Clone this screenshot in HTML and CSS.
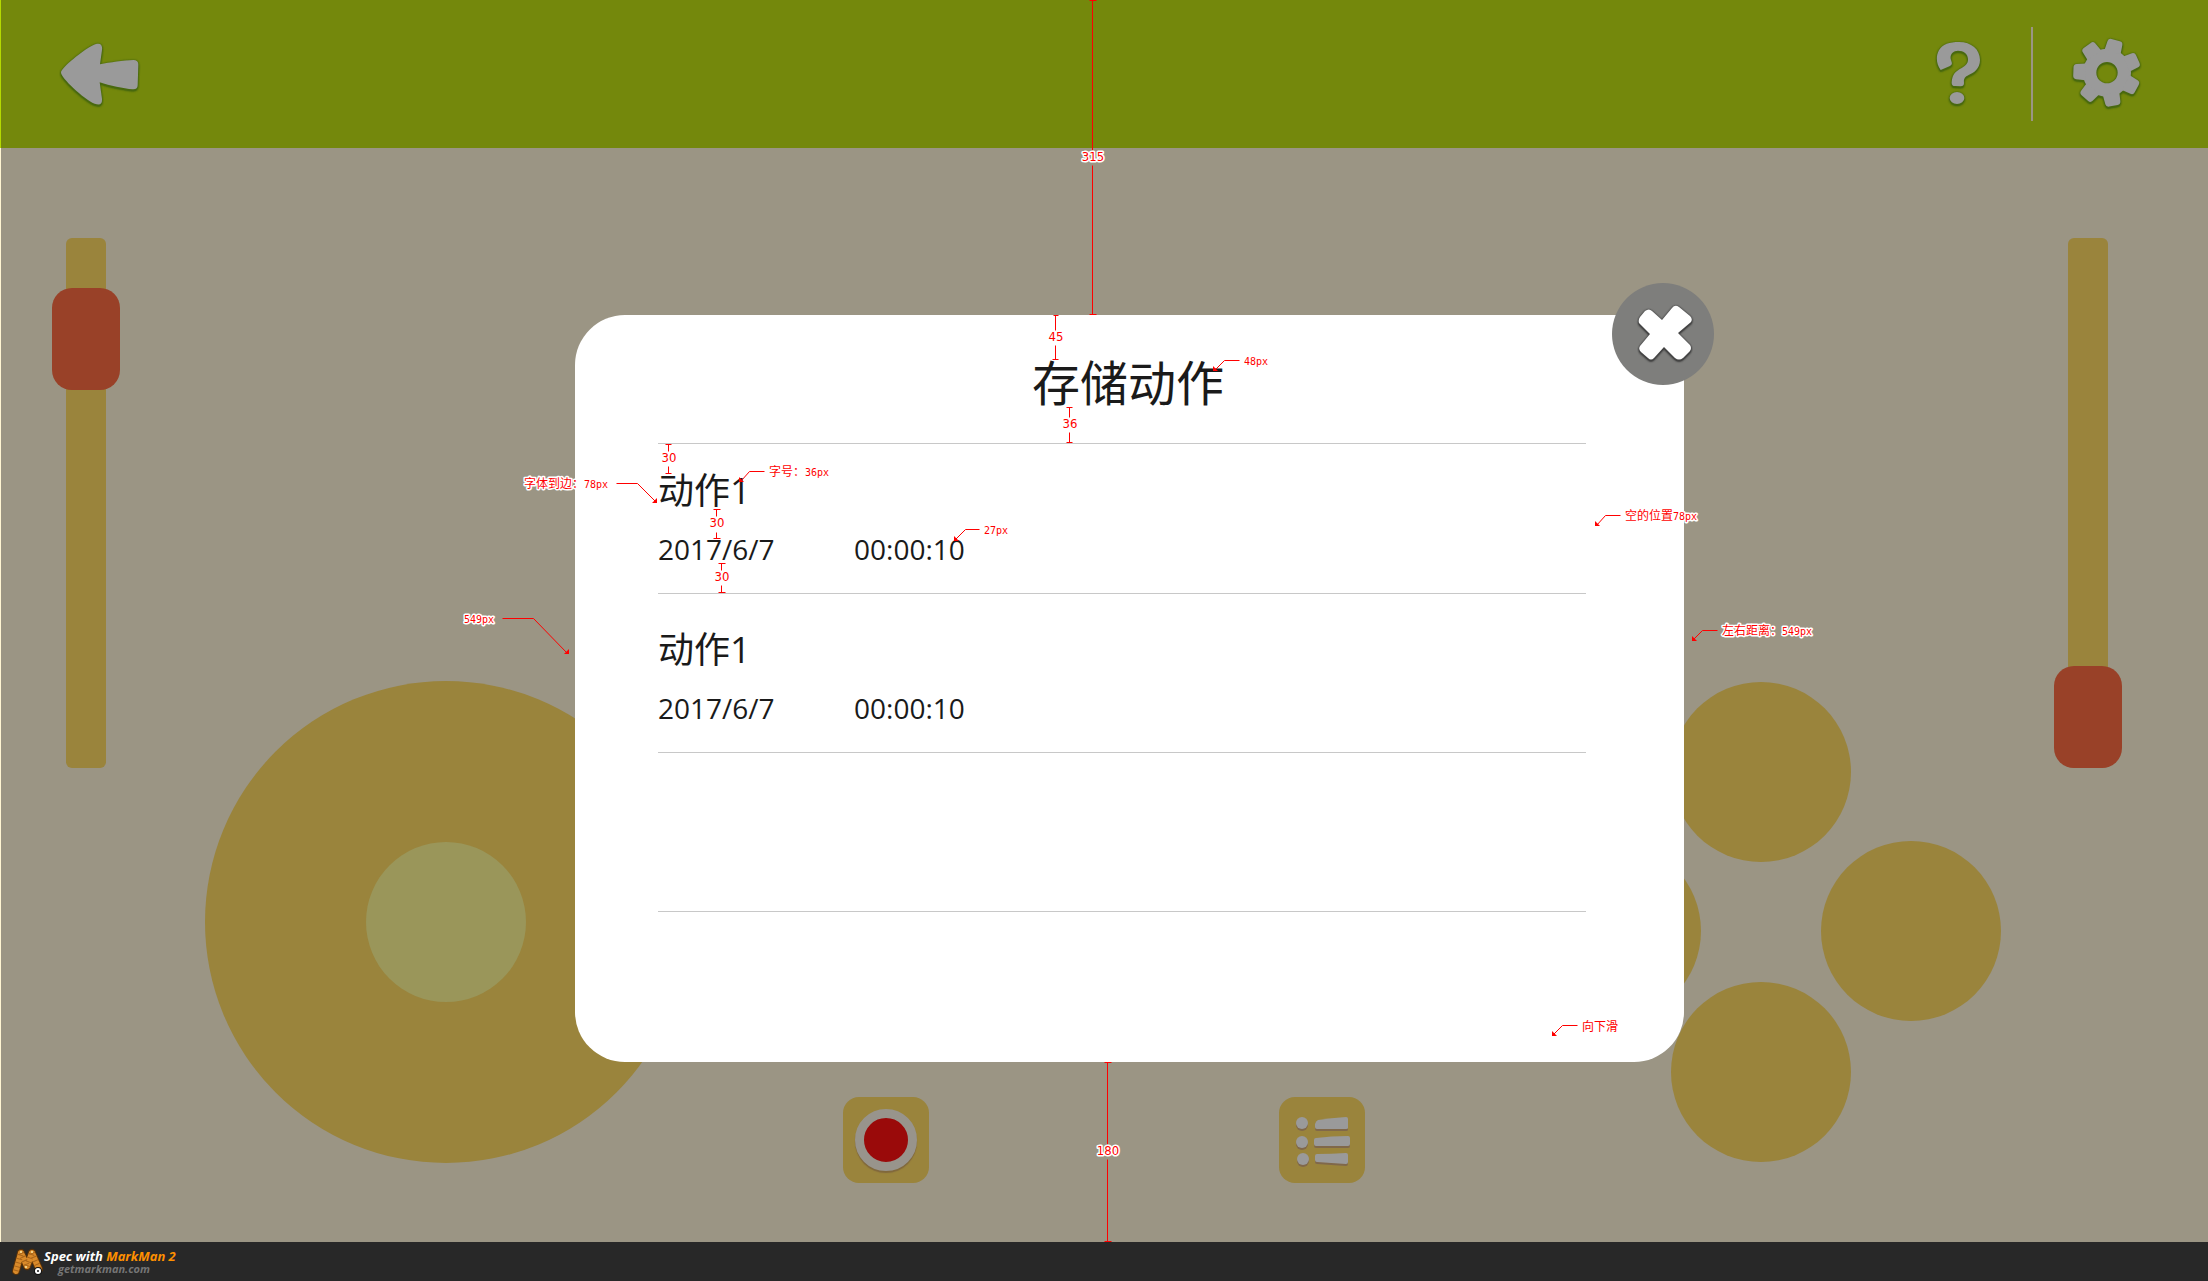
FILE: index.html
```html
<!DOCTYPE html>
<html lang="zh-CN">
<head>
<meta charset="utf-8">
<title>存储动作</title>
<link rel="stylesheet" href="styles.css">
</head>
<body>
<div class="screen">
  <header class="topbar">
    <button class="icon-button" type="button" aria-label="返回">
      <svg class="icon raised" width="84" height="70" viewBox="174 117 252 210">
        <path d="M183 218C183 204 250 150 279 136C300 126 308 133 306 150L300 193C330 187 370 181 400 180Q415 180 415 194L413 256Q413 269 398 268C370 266 330 257 299 247L306 296C307 313 300 316 284 311C250 297 183 232 183 218Z"/>
      </svg>
    </button>
    <div class="tools">
      <button class="icon-button" type="button" aria-label="帮助">
        <svg class="icon raised" width="50" height="70" viewBox="160 117 150 210">
          <path d="M183 210C170 192 168 170 177 152C188 132 210 126 238 126C275 126 301 148 301 180C301 206 282 219 267 225C254 231 252 238 253 249Q253 259 243 259L226 258Q215 258 216 246C218 224 226 215 246 204C260 196 265 190 265 178C265 162 252 152 235 152C218 152 209 166 214 180C218 190 218 194 211 198Z"/>
          <ellipse cx="232" cy="294" rx="22" ry="18"/>
        </svg>
      </button>
      <span class="divider"></span>
      <button class="icon-button" type="button" aria-label="设置">
        <svg class="icon raised" width="70" height="72" viewBox="-105 -104 210 216">
          <circle class="ring" r="52"/>
          <g id="teeth">
            <path id="tooth" d="M-25-64L-23-92Q-22-101-13-101L13-101Q22-101 23-92L25-64Z" transform="rotate(15)"/>
            <use href="#tooth" transform="rotate(51)"/>
            <use href="#tooth" transform="rotate(103)"/>
            <use href="#tooth" transform="rotate(154)"/>
            <use href="#tooth" transform="rotate(206)"/>
            <use href="#tooth" transform="rotate(257)"/>
            <use href="#tooth" transform="rotate(309)"/>
          </g>
        </svg>
      </button>
    </div>
  </header>

  <main class="stage">
    <input class="slider" type="range" min="0" max="428" value="50" aria-label="左滑杆">
    <div class="joystick"><span class="knob"></span></div>
    <div class="actions">
      <button class="tile" type="button" aria-label="录制"><span class="record"></span></button>
      <button class="tile" type="button" aria-label="动作列表">
        <svg class="icon list-icon" width="86" height="86" viewBox="0 0 86 86">
          <circle cx="23" cy="26" r="6"/>
          <circle cx="23" cy="45" r="6"/>
          <circle cx="24" cy="62" r="6"/>
          <path d="M39 23Q52 21 67 20Q69 20 69 22V31Q69 32 67 32H38Q36 32 36 30V27Q37 24 39 23Z"/>
          <path d="M37 41Q52 39 69 39Q71 39 71 41V47Q71 49 69 49H37Q35 49 35 47V43Q35 41 37 41Z"/>
          <path d="M38 57Q52 57 67 56Q69 56 69 58V65Q69 67 67 67Q52 66 38 65Q36 65 36 63V59Q36 57 38 57Z"/>
        </svg>
      </button>
    </div>
    <div class="pad">
      <button class="key key-up" type="button" aria-label="上"></button>
      <button class="key key-left" type="button" aria-label="左"></button>
      <button class="key key-right" type="button" aria-label="右"></button>
      <button class="key key-down" type="button" aria-label="下"></button>
    </div>
    <input class="slider" type="range" min="0" max="428" value="428" aria-label="右滑杆">
  </main>

  <section class="dialog" role="dialog" aria-labelledby="dialog-title">
    <h1 class="dialog-title" id="dialog-title">存储动作</h1>
    <ul class="records">
      <li class="record-row">
        <h2 class="record-name">动作1</h2>
        <p class="record-meta"><span class="record-date">2017/6/7</span><span>00:00:10</span></p>
      </li>
      <li class="record-row">
        <h2 class="record-name">动作1</h2>
        <p class="record-meta"><span class="record-date">2017/6/7</span><span>00:00:10</span></p>
      </li>
      <li class="record-row"></li>
    </ul>
    <button class="close" type="button" aria-label="关闭">
      <svg class="close-icon" width="102" height="102" viewBox="0 0 102 102">
        <path d="M33 28Q37 25 40 28L50 37L60 25Q63 21 67 24L78 33Q81 36 79 39L66 50L78 62Q80 65 78 68L71 75Q67 78 63 75L52 64L42 75Q39 78 36 75L29 69Q26 66 28 63L38 51L27 40Q26 37 28 34Z"/>
      </svg>
    </button>
  </section>

  <svg class="marks" width="2208" height="1242" viewBox="0 0 2208 1242" aria-hidden="true">
    <g class="rule">
      <path d="M1089 0H1096M1092 0V150M1092 165V314M1089 314H1096"/>
      <path d="M1053 315H1058M1055 315V330M1055 345V359M1052 359H1058"/>
      <path d="M1066 407H1072M1069 407V417M1069 432V442M1066 442H1072"/>
      <path d="M665 444H671M668 444V451M668 466V473M665 473H671"/>
      <path d="M713 509H720M716 509V516M716 532V538M713 538H720"/>
      <path d="M718 563H725M721 563V570M721 585V592M718 592H725"/>
      <path d="M1104 1062H1111M1107 1062V1144M1107 1159V1241M1104 1241H1111"/>
    </g>
    <g class="pointer">
      <path d="M616 483H637L655 501"/>
      <path d="M764 471H749L741 480"/>
      <path d="M979 529H965L955 539"/>
      <path d="M1239 360H1224L1214 370"/>
      <path d="M1620 515H1605L1596 525"/>
      <path d="M1717 630H1702L1692 640"/>
      <path d="M502 618H533L567 653"/>
      <path d="M1577 1025H1562L1552 1035"/>
    </g>
    <g class="head">
      <path d="M657 503V498L652 503Z"/>
      <path d="M739 482V477L744 482Z"/>
      <path d="M954 541V536L959 541Z"/>
      <path d="M1213 371V366L1218 371Z"/>
      <path d="M1595 526V521L1600 526Z"/>
      <path d="M1692 641V636L1697 641Z"/>
      <path d="M569 654V649L564 654Z"/>
      <path d="M1552 1036V1031L1557 1036Z"/>
    </g>
    <g class="size">
      <text x="1093" y="161">315</text>
      <text x="1056" y="341">45</text>
      <text x="1070" y="428">36</text>
      <text x="669" y="462">30</text>
      <text x="717" y="527">30</text>
      <text x="722" y="581">30</text>
      <text x="1108" y="1155">180</text>
    </g>
    <g class="note">
      <text x="524" y="488">字体到边：<tspan class="latin">78px</tspan></text>
      <text x="769" y="476">字号：<tspan class="latin">36px</tspan></text>
      <text class="latin" x="984" y="534">27px</text>
      <text class="latin" x="1244" y="365">48px</text>
      <text x="1625" y="520">空的位置<tspan class="latin">78px</tspan></text>
      <text x="1722" y="635">左右距离：<tspan class="latin">549px</tspan></text>
      <text class="latin" x="464" y="623">549px</text>
      <text x="1582" y="1031">向下滑</text>
    </g>
  </svg>
</div>

<footer class="credit">
  <svg class="credit-logo" width="34" height="30" viewBox="0 0 34 30">
    <g class="worm-edge"><path d="M6 24L11 6M11 6L17 19M17 19L22 6M22 6L29 22"/></g>
    <g class="worm"><path d="M6 24L11 6M11 6L17 19M17 19L22 6M22 6L29 22"/></g>
    <g class="worm-bands"><path d="M6 24L11 6M11 6L17 19M17 19L22 6M22 6L29 22"/></g>
    <circle cx="11" cy="5" r="1" fill="#ffe9a0"/>
    <circle cx="22" cy="5" r="1" fill="#ffe9a0"/>
    <circle cx="16" cy="20" r="1" fill="#ffe9a0"/>
    <circle cx="28" cy="24" r="4" fill="#111"/>
    <circle cx="28" cy="24" r="3" fill="#fff"/>
    <circle cx="28" cy="24" r="1" fill="#111"/>
  </svg>
  <div class="credit-text">
    <p class="credit-name">Spec with <span class="brand">MarkMan 2</span></p>
    <a class="credit-link" href="#">getmarkman.com</a>
  </div>
</footer>
</body>
</html>
```
FILE: styles.css
```css
* {
  box-sizing: border-box;
}

body {
  margin: 0;
  min-height: 100vh;
  display: flex;
  flex-direction: column;
  background: #9b9584;
  color: #1a1a1a;
  font-family: "Open Sans", "Noto Sans CJK SC", sans-serif;
}

button {
  padding: 0;
  border: 0;
  background: none;
}

.screen {
  position: relative;
  flex: 1;
  display: flex;
  flex-direction: column;
  border-left: 1px solid #fff5d2;
}

/* top bar */
.topbar {
  height: 148px;
  margin-left: -1px;
  padding: 0 66px 0 57px;
  display: flex;
  align-items: center;
  justify-content: space-between;
  background: #74880c;
  border-left: 1px solid #b4d900;
}

.tools {
  display: flex;
  align-items: center;
}

.icon-button,
.icon {
  display: block;
}

.icon {
  fill: #9a9a9a;
}

.raised {
  overflow: visible;
  filter: drop-shadow(0 0 1px #49690f) drop-shadow(0 1px 0 #49690f) drop-shadow(0 1px 0 #49690f);
}

.ring {
  fill: none;
  stroke: #9a9a9a;
  stroke-width: 40;
}

.divider {
  width: 2px;
  height: 94px;
  margin: 0 39px 0 48px;
  background: #9b9584;
}

/* controls behind the dialog */
.stage {
  flex: 1;
  display: flex;
  align-items: flex-end;
  padding: 90px 86px 59px 51px;
}

.slider {
  appearance: none;
  writing-mode: vertical-lr;
  align-self: flex-start;
  flex: none;
  width: 68px;
  height: 530px;
  margin: 0;
  background: none;
}

.slider::-webkit-slider-runnable-track {
  width: 40px;
  height: 530px;
  border-radius: 6px;
  background: #9a843c;
}

.slider::-webkit-slider-thumb {
  appearance: none;
  width: 68px;
  height: 102px;
  margin-left: -14px;
  border-radius: 20px;
  background: #994128;
}

.joystick {
  flex: none;
  width: 482px;
  height: 482px;
  margin: 0 0 20px 85px;
  display: grid;
  place-items: center;
  border-radius: 50%;
  background: #9a843c;
}

.knob {
  width: 160px;
  height: 160px;
  border-radius: 50%;
  background: #9a965a;
}

.actions {
  flex: 1;
  display: flex;
  justify-content: space-between;
  padding: 0 156px;
}

.tile {
  width: 86px;
  height: 86px;
  display: grid;
  place-items: center;
  border-radius: 16px;
  background: #9a843c;
}

.record {
  width: 62px;
  height: 62px;
  border: 9px solid #98948c;
  border-radius: 50%;
  background: #9a0a0a;
  box-shadow: 0 2px 1px #80683c;
}

.list-icon {
  filter: drop-shadow(0 2px 0 #80684a);
}

.pad {
  flex: none;
  margin: 0 53px 21px 0;
  display: grid;
  grid-template-columns: 150px 30px 120px 30px 150px;
  grid-template-rows: 159px 21px 120px 39px 141px;
}

.key {
  border-radius: 50%;
  background: #9a843c;
}

.key-up { grid-area: 1 / 2 / 3 / 5; }
.key-left { grid-area: 2 / 1 / 5 / 3; }
.key-right { grid-area: 2 / 4 / 5 / 6; }
.key-down { grid-area: 4 / 2 / 6 / 5; }

/* dialog */
.dialog {
  position: absolute;
  top: 315px;
  right: 524px;
  bottom: 180px;
  left: 574px;
  padding: 0 98px 0 83px;
  border-radius: 50px;
  background: #fff;
}

.dialog-title {
  margin: 0;
  padding: 32px 0 24px 12px;
  font-size: 48px;
  font-weight: 400;
  line-height: 72px;
  text-align: center;
  border-bottom: 1px solid #c8c8c8;
}

.records {
  margin: 0;
  padding: 0;
  list-style: none;
}

.record-row {
  height: 159px;
  padding-top: 30px;
  border-bottom: 1px solid #c8c8c8;
}

.record-row:first-child {
  height: 150px;
  padding-top: 21px;
}

.record-name {
  margin: 0;
  font-size: 36px;
  font-weight: 400;
  line-height: 52px;
}

.record-meta {
  margin: 0;
  padding-top: 12px;
  display: flex;
  font-size: 28px;
  line-height: 40px;
}

.record-date {
  width: 196px;
}

.close {
  position: absolute;
  top: -32px;
  right: -30px;
  border-radius: 50%;
  background: #7e7e7c;
}

.close-icon {
  display: block;
  fill: #fff;
  filter: drop-shadow(0 0 1px #444) drop-shadow(0 1px 0 #444) drop-shadow(0 1px 0 #444);
}

/* measurement marks */
.marks {
  position: absolute;
  top: 0;
  left: -1px;
  pointer-events: none;
}

.rule path,
.pointer path {
  fill: none;
  stroke: #f00;
  transform: translate(0.5px, 0.5px);
}

.head {
  fill: #f00;
}

.marks text {
  fill: #f00;
  stroke: #fff;
  stroke-width: 3px;
  stroke-linejoin: round;
  paint-order: stroke;
}

.size {
  font-family: "DejaVu Sans Condensed", "Noto Sans", sans-serif;
  font-size: 13px;
  text-anchor: middle;
}

.note {
  font-family: "Noto Sans CJK SC", sans-serif;
  font-size: 12px;
}

.latin {
  font-family: "DejaVu Sans Mono", monospace;
  font-size: 10px;
}

/* credit strip */
.credit {
  height: 39px;
  padding-left: 10px;
  display: flex;
  align-items: center;
  background: #282828;
}

.worm-edge,
.worm,
.worm-bands {
  fill: none;
  stroke-linecap: round;
  stroke-linejoin: round;
}

.worm-edge {
  stroke: #5a3208;
  stroke-width: 8;
}

.worm {
  stroke: #d98a2a;
  stroke-width: 6;
}

.worm-bands {
  stroke: #a8641a;
  stroke-width: 6;
  stroke-linecap: butt;
  stroke-dasharray: 1 3;
}

.credit-text {
  font-family: "Open Sans", sans-serif;
  font-weight: 700;
  font-style: italic;
}

.credit-name {
  margin: 0;
  color: #fff;
  font-size: 13px;
  line-height: 14px;
}

.brand {
  color: #ff9000;
}

.credit-link {
  display: block;
  padding-left: 14px;
  color: #757575;
  font-size: 11px;
  line-height: 12px;
  text-decoration: none;
}
```
